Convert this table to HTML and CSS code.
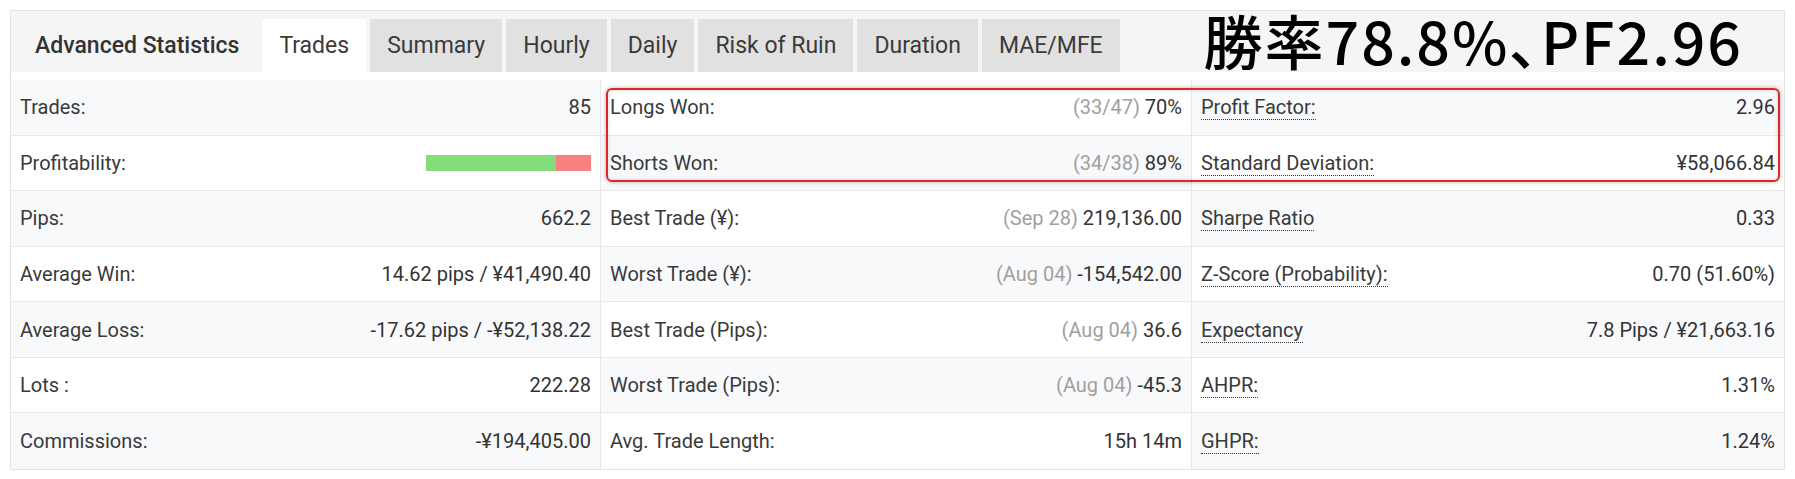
FILE: index.html
```html
<!DOCTYPE html>
<html lang="en">
<head>
<meta charset="utf-8">
<title>Advanced Statistics</title>
<link rel="stylesheet" href="styles.css">
</head>
<body>
<div class="panel">
  <div class="tabbar">
    <div class="heading">Advanced Statistics</div>
    <div class="tabs">
      <div class="tab active">Trades</div>
      <div class="tab">Summary</div>
      <div class="tab">Hourly</div>
      <div class="tab">Daily</div>
      <div class="tab">Risk of Ruin</div>
      <div class="tab">Duration</div>
      <div class="tab">MAE/MFE</div>
    </div>
    <div class="title">勝率78.8%<span class="punct">、</span>PF2.96</div>
  </div>
  <div class="body">
    <div class="col">
      <div class="row"><span class="label">Trades:</span><span class="value">85</span></div>
      <div class="row"><span class="label">Profitability:</span><span class="bar"><span class="win" style="width:78.8%"></span><span class="loss"></span></span></div>
      <div class="row"><span class="label">Pips:</span><span class="value">662.2</span></div>
      <div class="row"><span class="label">Average Win:</span><span class="value">14.62 pips / ¥41,490.40</span></div>
      <div class="row"><span class="label">Average Loss:</span><span class="value">-17.62 pips / -¥52,138.22</span></div>
      <div class="row"><span class="label">Lots :</span><span class="value">222.28</span></div>
      <div class="row"><span class="label">Commissions:</span><span class="value">-¥194,405.00</span></div>
    </div>
    <div class="col alt">
      <div class="row"><span class="label">Longs Won:</span><span class="value"><span class="muted">(33/47)</span> 70%</span></div>
      <div class="row"><span class="label">Shorts Won:</span><span class="value"><span class="muted">(34/38)</span> 89%</span></div>
      <div class="row"><span class="label">Best Trade (¥):</span><span class="value"><span class="muted">(Sep 28)</span> 219,136.00</span></div>
      <div class="row"><span class="label">Worst Trade (¥):</span><span class="value"><span class="muted">(Aug 04)</span> -154,542.00</span></div>
      <div class="row"><span class="label">Best Trade (Pips):</span><span class="value"><span class="muted">(Aug 04)</span> 36.6</span></div>
      <div class="row"><span class="label">Worst Trade (Pips):</span><span class="value"><span class="muted">(Aug 04)</span> -45.3</span></div>
      <div class="row"><span class="label">Avg. Trade Length:</span><span class="value">15h 14m</span></div>
    </div>
    <div class="col">
      <div class="row"><span class="label"><span class="hint">Profit Factor:</span></span><span class="value">2.96</span></div>
      <div class="row"><span class="label"><span class="hint">Standard Deviation:</span></span><span class="value">¥58,066.84</span></div>
      <div class="row"><span class="label"><span class="hint">Sharpe Ratio</span></span><span class="value">0.33</span></div>
      <div class="row"><span class="label"><span class="hint">Z-Score (Probability):</span></span><span class="value">0.70 (51.60%)</span></div>
      <div class="row"><span class="label"><span class="hint">Expectancy</span></span><span class="value">7.8 Pips / ¥21,663.16</span></div>
      <div class="row"><span class="label"><span class="hint">AHPR:</span></span><span class="value">1.31%</span></div>
      <div class="row"><span class="label"><span class="hint">GHPR:</span></span><span class="value">1.24%</span></div>
    </div>
    <div class="highlight"></div>
  </div>
</div>
</body>
</html>
```

FILE: styles.css
```css
* { box-sizing: border-box; }

body {
  margin: 0;
  background: #ffffff;
  font-family: Roboto, "Liberation Sans", sans-serif;
  color: #333333;
}

.panel {
  margin: 10px 0 0 10px;
  width: 1775px;
  border: 1px solid #e4e4e4;
}

.tabbar {
  height: 61px;
  background: #f5f5f5;
  display: flex;
  align-items: flex-end;
}

.heading {
  height: 53px;
  line-height: 53px;
  padding: 0 23px 0 24px;
  font-size: 23px;
  font-weight: 500;
  color: #333333;
}

.tabs {
  display: flex;
  gap: 4px;
}

.tab {
  height: 53px;
  line-height: 53px;
  padding: 0 17px;
  font-size: 23px;
  background: #e1e1e1;
  color: #3a3a3a;
}

.tab.active {
  background: #ffffff;
}

.title {
  margin-left: auto;
  margin-right: 41px;
  align-self: stretch;
  font-family: "Noto Sans CJK JP", sans-serif;
  font-size: 59px;
  font-weight: 500;
  letter-spacing: 2px;
  line-height: 58px;
  color: #000000;
}

.punct {
  font-feature-settings: "palt";
}

.body {
  margin-top: 8px;
  display: grid;
  grid-template-columns: 589px 591px 1fr;
  position: relative;
}

.col + .col {
  border-left: 1px solid #e6e6e6;
}

.row {
  height: 55.57px;
  display: flex;
  align-items: center;
  justify-content: space-between;
  padding: 0 9px;
  border-bottom: 1px solid #e8e8e8;
  font-size: 20px;
}

.row:last-child {
  border-bottom: none;
}

.col .row:nth-child(odd) { background: #f8f9fb; }
.col.alt .row:nth-child(odd) { background: #ffffff; }
.col.alt .row:nth-child(even) { background: #f8f9fb; }

.label { color: #3a3a3a; }
.value { color: #333333; }
.muted { color: #a0a0a0; }

.hint {
  border-bottom: 1px dotted #333333;
}

.bar {
  display: flex;
  width: 165px;
  height: 16px;
}

.bar .win { background: #86dc7b; }
.bar .loss { flex: 1; background: #f78080; }

.highlight {
  position: absolute;
  left: 595px;
  top: 8px;
  width: 1174px;
  height: 94px;
  border: 2px solid #e1232a;
  border-radius: 6px;
  box-shadow: 0 0 4px rgba(0, 0, 0, 0.3), inset 0 0 4px rgba(0, 0, 0, 0.15);
  pointer-events: none;
}
```
